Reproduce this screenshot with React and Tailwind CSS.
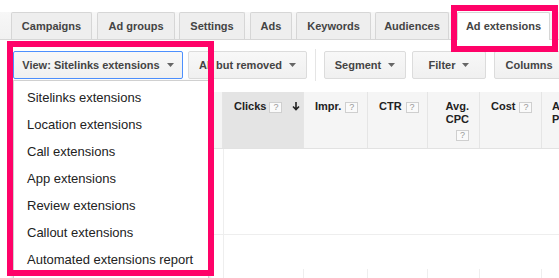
import React from "react";

const tabs = [
    { label: "Campaigns", cls: "ml-[11px] w-[81px]" },
    { label: "Ad groups", cls: "ml-[5px] w-[78px]" },
    { label: "Settings", cls: "ml-[4px] w-[66px]" },
    { label: "Ads", cls: "ml-[5px] w-[42px]" },
    { label: "Keywords", cls: "ml-[4px] w-[75px]" },
    { label: "Audiences", cls: "ml-[4px] w-[74px]" },
];

const menuItems = [
    "Sitelinks extensions",
    "Location extensions",
    "Call extensions",
    "App extensions",
    "Review extensions",
    "Callout extensions",
    "Automated extensions report",
];

const Caret = () => (
    <svg width="7" height="4" viewBox="0 0 7 4" className="shrink-0">
        <path d="M0 0h7L3.5 4z" fill="#666" />
    </svg>
);

const Help = () => (
    <span className="inline-flex items-center justify-center w-[13px] h-[11px] border border-[#cfcfcf] bg-[#fafafa] text-[9px] leading-none font-normal text-[#999] align-middle">
        ?
    </span>
);

const ToolButton = ({ label, cls, focused }) => (
    <div
        className={`shrink-0 h-[28px] flex items-center justify-center gap-[7px] rounded-[2px] border bg-gradient-to-b from-[#f8f8f8] to-[#f0f0f0] text-[11px] font-bold text-[#444] ${focused ? "border-[#4d90fe]" : "border-[#dcdcdc]"} ${cls}`}
    >
        <span className="whitespace-nowrap">{label}</span>
        <Caret />
    </div>
);

const App = () => {
    return (
        <div className="relative w-[559px] h-[278px] overflow-hidden bg-white font-['Liberation_Sans',Arial,sans-serif]">
            {/* Tabs */}
            <div className="h-[12px]" />
            <div className="flex items-end h-[28px] border-b border-[#d6d6d6] bg-gradient-to-b from-[#f7f7f7] to-[#f1f1f1]">
                {tabs.map((t) => (
                    <div
                        key={t.label}
                        className={`shrink-0 h-[27px] flex items-center justify-center border border-b-0 border-[#d6d6d6] rounded-t-[2px] bg-[#eeeeee] text-[11px] font-bold text-[#444] ${t.cls}`}
                    >
                        {t.label}
                    </div>
                ))}
                <div className="shrink-0 ml-[8px] w-[93px] h-[28px] -mb-px flex items-center justify-center border border-b-0 border-[#d6d6d6] rounded-t-[2px] bg-white text-[11px] font-bold text-[#444]">
                    Ad extensions
                </div>
            </div>

            {/* Toolbar */}
            <div className="mt-[11px] flex items-center h-[28px]">
                <ToolButton label="View: Sitelinks extensions" cls="ml-[13px] w-[170px]" focused />
                <ToolButton label="All but removed" cls="ml-[5px] w-[119px]" />
                <div className="shrink-0 ml-[8px] w-px h-[32px] bg-[#e5e5e5]" />
                <ToolButton label="Segment" cls="ml-[8px] w-[82px]" />
                <ToolButton label="Filter" cls="ml-[6px] w-[74px]" />
                <ToolButton label="Columns" cls="ml-[8px] w-[84px]" />
            </div>

            {/* Table */}
            <div className="mt-[13px] ml-[13px] w-[620px]">
                <div className="flex h-[57px] bg-[#f5f5f5] border-b border-[#e2e2e2] text-[11px] font-bold text-[#222] leading-[13px]">
                    <div className="w-[210px] shrink-0 border-r border-[#e5e5e5]" />
                    <div className="w-[81px] shrink-0 bg-[#e4e4e4] border-r border-[#e5e5e5] pt-[8px] pl-[11px] flex items-start">
                        <span>Clicks</span>
                        <span className="ml-[3px]"><Help /></span>
                        <svg width="8" height="9" viewBox="0 0 8 9" className="ml-[10px] mt-[2px]">
                            <path d="M4 0v7M1 4.5L4 7.5 7 4.5" stroke="#222" strokeWidth="1.6" fill="none" />
                        </svg>
                    </div>
                    <div className="w-[64px] shrink-0 border-r border-[#e5e5e5] pt-[8px] pl-[11px] flex items-start">
                        <span>Impr.</span>
                        <span className="ml-[4px]"><Help /></span>
                    </div>
                    <div className="w-[60px] shrink-0 border-r border-[#e5e5e5] pt-[8px] pl-[11px] flex items-start">
                        <span>CTR</span>
                        <span className="ml-[4px]"><Help /></span>
                    </div>
                    <div className="w-[52px] shrink-0 border-r border-[#e5e5e5] pt-[8px] pr-[10px] flex flex-col items-end text-right">
                        <span>Avg.</span>
                        <span>CPC</span>
                        <span className="mt-[2px]"><Help /></span>
                    </div>
                    <div className="w-[62px] shrink-0 border-r border-[#e5e5e5] pt-[8px] pl-[11px] flex items-start">
                        <span>Cost</span>
                        <span className="ml-[4px]"><Help /></span>
                    </div>
                    <div className="w-[60px] shrink-0 pt-[8px] pl-[10px] flex flex-col">
                        <span>Avg.</span>
                        <span>Pos.</span>
                    </div>
                </div>
                <div className="flex h-[86px] border-b border-[#eeeeee]">
                    <div className="w-[210px] shrink-0" />
                    <div className="flex-1 border-l border-[#eeeeee]" />
                </div>
                <div className="flex h-[34px]">
                    <div className="w-[210px] shrink-0" />
                    <div className="flex-1 border-l border-[#eeeeee]" />
                </div>
                <div className="flex h-[20px] text-[13px] text-[#222]">
                    <div className="w-[77px] shrink-0 border-l border-r border-[#eeeeee] pl-[27px] pt-[6px]">$15</div>
                    <div className="w-[133px] shrink-0" />
                    <div className="w-[81px] shrink-0 border-l border-r border-[#eeeeee]" />
                    <div className="w-[64px] shrink-0 border-r border-[#eeeeee]" />
                    <div className="w-[60px] shrink-0 border-r border-[#eeeeee]" />
                    <div className="w-[52px] shrink-0 border-r border-[#eeeeee]" />
                    <div className="w-[62px] shrink-0 border-r border-[#eeeeee]" />
                </div>
            </div>

            {/* Dropdown menu */}
            <div className="absolute left-[13px] top-[80px] w-[196px] h-[200px] bg-white border border-[#d0d0d0] shadow-[0_2px_4px_rgba(0,0,0,0.2)] pt-[3px]">
                {menuItems.map((item) => (
                    <div key={item} className="h-[27px] flex items-center pl-[13px] text-[13px] text-[#222] whitespace-nowrap">
                        {item}
                    </div>
                ))}
            </div>

            {/* Highlight boxes */}
            <div className="absolute left-[451px] top-[5px] w-[107px] h-[47px] border-[6px] border-[#ff0268]" />
            <div className="absolute left-[7px] top-[41px] w-[207px] h-[235px] border-[6px] border-[#ff0268]" />
        </div>
    );
};

export default App;
